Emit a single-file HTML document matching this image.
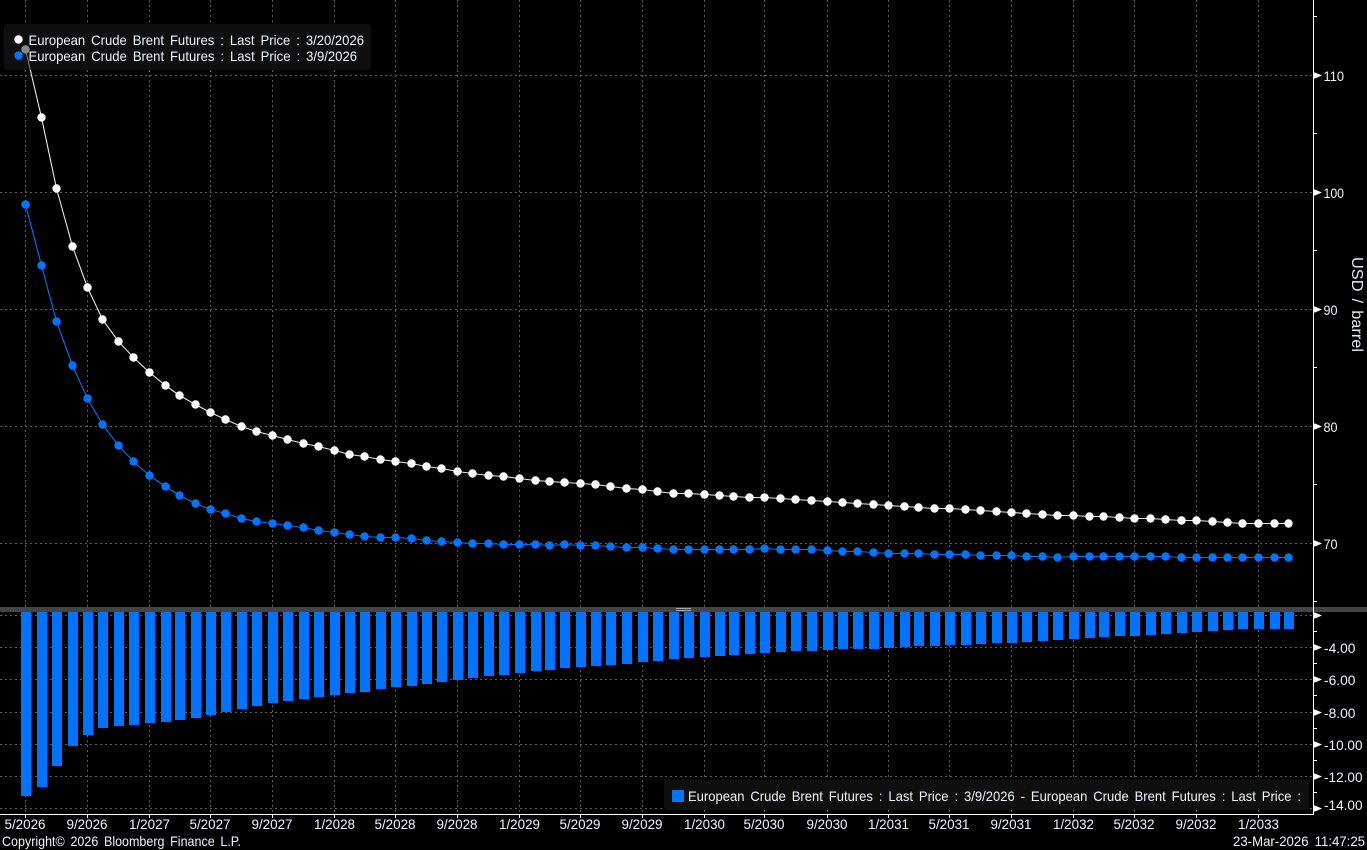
<!DOCTYPE html>
<html><head><meta charset="utf-8"><title>Brent Futures Curve</title>
<style>
html,body{margin:0;padding:0;background:#000;overflow:hidden}
svg{display:block}
text{font-family:"Liberation Sans",Arial,sans-serif;font-size:14px;fill:#eef5ff}
.w{word-spacing:2.5px}
</style></head><body>
<svg width="1367" height="850" viewBox="0 0 1367 850" xmlns="http://www.w3.org/2000/svg">
<defs>
<marker id="mw" markerUnits="userSpaceOnUse" markerWidth="10" markerHeight="10" refX="5" refY="5"><circle cx="5" cy="5" r="4.2" fill="#fff"/></marker>
<marker id="mb" markerUnits="userSpaceOnUse" markerWidth="10" markerHeight="10" refX="5" refY="5"><circle cx="5" cy="5" r="4.2" fill="#0073ff"/></marker>
</defs>
<rect width="1367" height="850" fill="#000"/>
<!-- grid -->
<path fill="none" stroke="#5c5c5c" stroke-width="1" stroke-dasharray="2 3" shape-rendering="crispEdges" d="M25.5 0V814M87.5 0V814M149.5 0V814M210.5 0V814M272.5 0V814M334.5 0V814M395.5 0V814M457.5 0V814M519.5 0V814M580.5 0V814M642.5 0V814M704.5 0V814M764.5 0V814M827.5 0V814M888.5 0V814M949.5 0V814M1011.5 0V814M1073.5 0V814M1134.5 0V814M1196.5 0V814M1258.5 0V814M0 75.5H1313M0 192.5H1313M0 309.5H1313M0 426.5H1313M0 543.5H1313M0 615.5H1313M0 647.5H1313M0 679.5H1313M0 712.5H1313M0 744.5H1313M0 776.5H1313M0 808.5H1313"/>
<rect x="4" y="24" width="367" height="46" rx="3" fill="#0f0f0f"/>
<rect x="664" y="780" width="645" height="30" rx="3" fill="#0f0f0f"/>
<!-- separator -->
<rect x="0" y="607" width="1367" height="5" fill="#444"/>
<rect x="676" y="608" width="15" height="1" fill="#aaa"/>
<rect x="676" y="610" width="15" height="1" fill="#aaa"/>
<!-- bars -->
<path fill="#0073ff" shape-rendering="crispEdges" d="M21 612h10V796h-10zM37 612h10V787h-10zM52 612h10V766h-10zM68 612h10V746h-10zM83 612h10V735h-10zM98 612h10V728h-10zM114 612h10V726h-10zM129 612h10V725h-10zM145 612h10V723h-10zM161 612h10V722h-10zM175 612h10V720h-10zM191 612h10V718h-10zM206 612h10V715h-10zM221 612h10V712h-10zM237 612h10V709h-10zM252 612h10V706h-10zM268 612h10V703h-10zM283 612h10V701h-10zM299 612h10V699h-10zM314 612h10V697h-10zM330 612h10V695h-10zM345 612h10V693h-10zM360 612h10V692h-10zM376 612h10V689h-10zM391 612h10V687h-10zM407 612h10V686h-10zM422 612h10V684h-10zM437 612h10V682h-10zM453 612h10V680h-10zM468 612h10V678h-10zM484 612h10V676h-10zM499 612h10V675h-10zM515 612h10V673h-10zM531 612h10V671h-10zM545 612h10V670h-10zM560 612h10V668h-10zM576 612h10V667h-10zM591 612h10V666h-10zM606 612h10V665h-10zM622 612h10V664h-10zM638 612h10V662h-10zM653 612h10V661h-10zM669 612h10V659h-10zM684 612h10V658h-10zM700 612h10V657h-10zM715 612h10V656h-10zM729 612h10V655h-10zM745 612h10V654h-10zM760 612h10V653h-10zM776 612h10V652h-10zM791 612h10V651h-10zM807 612h10V651h-10zM823 612h10V650h-10zM838 612h10V649h-10zM853 612h10V649h-10zM869 612h10V649h-10zM884 612h10V648h-10zM900 612h10V647h-10zM914 612h10V646h-10zM930 612h10V646h-10zM945 612h10V645h-10zM961 612h10V645h-10zM976 612h10V644h-10zM992 612h10V643h-10zM1007 612h10V643h-10zM1022 612h10V642h-10zM1038 612h10V641h-10zM1053 612h10V640h-10zM1069 612h10V639h-10zM1085 612h10V638h-10zM1099 612h10V637h-10zM1115 612h10V636h-10zM1130 612h10V636h-10zM1146 612h10V635h-10zM1161 612h10V634h-10zM1177 612h10V633h-10zM1192 612h10V632h-10zM1208 612h10V631h-10zM1223 612h10V630h-10zM1238 612h10V629h-10zM1254 612h10V629h-10zM1270 612h10V629h-10zM1284 612h10V629h-10z"/>
<!-- blue series -->
<polyline fill="none" stroke="#0073ff" stroke-width="1.1" marker-start="url(#mb)" marker-mid="url(#mb)" marker-end="url(#mb)" points="25.5,204.5 41.5,265.5 56.5,321.5 72.5,365.5 87.5,398.5 102.5,424.5 118.5,445.5 133.5,461.5 149.5,475.5 165.5,486.5 179.5,495.5 195.5,503.5 210.5,509.5 225.5,513.5 241.5,518.5 256.5,521.5 272.5,523.5 287.5,525.5 303.5,527.5 318.5,530.5 334.5,532.5 349.5,534.5 364.5,536.5 380.5,537.5 395.5,537.5 411.5,538.5 426.5,540.5 441.5,541.5 457.5,542.5 472.5,543.5 488.5,543.5 503.5,544.5 519.5,544.5 535.5,544.5 549.5,545.5 564.5,544.5 580.5,545.5 595.5,545.5 610.5,546.5 626.5,547.5 642.5,547.5 657.5,548.5 673.5,549.5 688.5,549.5 704.5,549.5 719.5,549.5 733.5,549.5 749.5,549.5 764.5,548.5 780.5,549.5 795.5,549.5 811.5,549.5 827.5,550.5 842.5,551.5 857.5,551.5 873.5,552.5 888.5,553.5 904.5,553.5 918.5,553.5 934.5,554.5 949.5,554.5 965.5,554.5 980.5,555.5 996.5,555.5 1011.5,555.5 1026.5,556.5 1042.5,556.5 1057.5,557.5 1073.5,556.5 1089.5,556.5 1103.5,556.5 1119.5,556.5 1134.5,556.5 1150.5,556.5 1165.5,556.5 1181.5,557.5 1196.5,557.5 1212.5,557.5 1227.5,557.5 1242.5,557.5 1258.5,557.5 1274.5,557.5 1288.5,557.5"/>
<!-- white series -->
<polyline fill="none" stroke="#e8e8e8" stroke-width="1.1" marker-start="url(#mw)" marker-mid="url(#mw)" marker-end="url(#mw)" points="25.5,49.5 41.5,117.5 56.5,188.5 72.5,246.5 87.5,287.5 102.5,319.5 118.5,341.5 133.5,357.5 149.5,372.5 165.5,385.5 179.5,395.5 195.5,404.5 210.5,412.5 225.5,419.5 241.5,426.5 256.5,431.5 272.5,435.5 287.5,439.5 303.5,443.5 318.5,446.5 334.5,450.5 349.5,454.5 364.5,456.5 380.5,459.5 395.5,461.5 411.5,463.5 426.5,466.5 441.5,468.5 457.5,471.5 472.5,473.5 488.5,475.5 503.5,476.5 519.5,478.5 535.5,480.5 549.5,481.5 564.5,482.5 580.5,483.5 595.5,484.5 610.5,486.5 626.5,488.5 642.5,489.5 657.5,491.5 673.5,493.5 688.5,493.5 704.5,494.5 719.5,495.5 733.5,496.5 749.5,497.5 764.5,497.5 780.5,498.5 795.5,499.5 811.5,500.5 827.5,501.5 842.5,502.5 857.5,503.5 873.5,504.5 888.5,505.5 904.5,506.5 918.5,507.5 934.5,508.5 949.5,508.5 965.5,509.5 980.5,510.5 996.5,511.5 1011.5,512.5 1026.5,513.5 1042.5,514.5 1057.5,515.5 1073.5,515.5 1089.5,516.5 1103.5,516.5 1119.5,517.5 1134.5,518.5 1150.5,518.5 1165.5,519.5 1181.5,520.5 1196.5,520.5 1212.5,521.5 1227.5,522.5 1242.5,523.5 1258.5,523.5 1274.5,523.5 1288.5,523.5"/>
<!-- legend overlay -->
<rect x="4" y="24" width="367" height="46" rx="3" fill="#0f0f0f" fill-opacity=".5"/>
<circle cx="18.5" cy="39.5" r="4.2" fill="#fff"/>
<circle cx="18.5" cy="55.5" r="4.2" fill="#0073ff"/>
<text class="w" x="28.5" y="45" textLength="335.5" lengthAdjust="spacingAndGlyphs">European Crude Brent Futures : Last Price : 3/20/2026</text>
<text class="w" x="28.5" y="61" textLength="328.5" lengthAdjust="spacingAndGlyphs">European Crude Brent Futures : Last Price : 3/9/2026</text>
<rect x="672" y="790" width="12" height="12" fill="#0073ff"/>
<text class="w" x="688" y="801" textLength="613" lengthAdjust="spacingAndGlyphs">European Crude Brent Futures : Last Price : 3/9/2026 - European Crude Brent Futures : Last Price :</text>
<!-- axes -->
<path fill="none" stroke="#fff" stroke-width="1" shape-rendering="crispEdges" d="M1313.5 0V815M0 814.5H1314M25.5 814V818M87.5 814V818M149.5 814V818M210.5 814V818M272.5 814V818M334.5 814V818M395.5 814V818M457.5 814V818M519.5 814V818M580.5 814V818M642.5 814V818M704.5 814V818M764.5 814V818M827.5 814V818M888.5 814V818M949.5 814V818M1011.5 814V818M1073.5 814V818M1134.5 814V818M1196.5 814V818M1258.5 814V818M1313 16.5H1317M1313 133.5H1317M1313 250.5H1317M1313 367.5H1317M1313 484.5H1317M1313 601.5H1317M1313 631.5H1317M1313 663.5H1317M1313 695.5H1317M1313 728.5H1317M1313 760.5H1317M1313 792.5H1317"/>
<path fill="#fff" d="M1313 72.500h2l7 3-7 3h-2zM1313 189.500h2l7 3-7 3h-2zM1313 306.500h2l7 3-7 3h-2zM1313 423.500h2l7 3-7 3h-2zM1313 540.500h2l7 3-7 3h-2zM1313 612.500h2l7 3-7 3h-2zM1313 644.500h2l7 3-7 3h-2zM1313 676.500h2l7 3-7 3h-2zM1313 709.500h2l7 3-7 3h-2zM1313 741.500h2l7 3-7 3h-2zM1313 773.500h2l7 3-7 3h-2zM1313 805.500h2l7 3-7 3h-2z"/>
<!-- y labels -->
<text x="1323.500" y="81" textLength="20.500" lengthAdjust="spacingAndGlyphs">110</text>
<text x="1323.500" y="198" textLength="20.500" lengthAdjust="spacingAndGlyphs">100</text>
<text x="1323.500" y="315" textLength="14" lengthAdjust="spacingAndGlyphs">90</text>
<text x="1323.500" y="432" textLength="14" lengthAdjust="spacingAndGlyphs">80</text>
<text x="1323.500" y="549" textLength="14" lengthAdjust="spacingAndGlyphs">70</text>
<text x="1324" y="653" textLength="31.500" lengthAdjust="spacingAndGlyphs">-4.00</text>
<text x="1324" y="685" textLength="31.500" lengthAdjust="spacingAndGlyphs">-6.00</text>
<text x="1324" y="718" textLength="31.500" lengthAdjust="spacingAndGlyphs">-8.00</text>
<text x="1324" y="750" textLength="38.500" lengthAdjust="spacingAndGlyphs">-10.00</text>
<text x="1324" y="782" textLength="38.500" lengthAdjust="spacingAndGlyphs">-12.00</text>
<text x="1324" y="810" textLength="38.500" lengthAdjust="spacingAndGlyphs">-14.00</text>
<text class="w" transform="translate(1352 257) rotate(90)" style="font-size:16px;fill:#dcebf5" textLength="95" lengthAdjust="spacingAndGlyphs">USD / barrel</text>
<!-- x labels -->
<g>
<text x="4.500" y="829" textLength="41" lengthAdjust="spacingAndGlyphs">5/2026</text>
<text x="66.500" y="829" textLength="41" lengthAdjust="spacingAndGlyphs">9/2026</text>
<text x="129" y="829" textLength="41" lengthAdjust="spacingAndGlyphs">1/2027</text>
<text x="189.500" y="829" textLength="41" lengthAdjust="spacingAndGlyphs">5/2027</text>
<text x="251.500" y="829" textLength="41" lengthAdjust="spacingAndGlyphs">9/2027</text>
<text x="314" y="829" textLength="41" lengthAdjust="spacingAndGlyphs">1/2028</text>
<text x="374.500" y="829" textLength="41" lengthAdjust="spacingAndGlyphs">5/2028</text>
<text x="436.500" y="829" textLength="41" lengthAdjust="spacingAndGlyphs">9/2028</text>
<text x="499" y="829" textLength="41" lengthAdjust="spacingAndGlyphs">1/2029</text>
<text x="559.500" y="829" textLength="41" lengthAdjust="spacingAndGlyphs">5/2029</text>
<text x="621.500" y="829" textLength="41" lengthAdjust="spacingAndGlyphs">9/2029</text>
<text x="684" y="829" textLength="41" lengthAdjust="spacingAndGlyphs">1/2030</text>
<text x="743.500" y="829" textLength="41" lengthAdjust="spacingAndGlyphs">5/2030</text>
<text x="806.500" y="829" textLength="41" lengthAdjust="spacingAndGlyphs">9/2030</text>
<text x="868" y="829" textLength="41" lengthAdjust="spacingAndGlyphs">1/2031</text>
<text x="928.500" y="829" textLength="41" lengthAdjust="spacingAndGlyphs">5/2031</text>
<text x="990.500" y="829" textLength="41" lengthAdjust="spacingAndGlyphs">9/2031</text>
<text x="1053" y="829" textLength="41" lengthAdjust="spacingAndGlyphs">1/2032</text>
<text x="1113.500" y="829" textLength="41" lengthAdjust="spacingAndGlyphs">5/2032</text>
<text x="1175.500" y="829" textLength="41" lengthAdjust="spacingAndGlyphs">9/2032</text>
<text x="1238" y="829" textLength="41" lengthAdjust="spacingAndGlyphs">1/2033</text>
</g>
<text class="w" x="2" y="846" textLength="239" lengthAdjust="spacingAndGlyphs">Copyright© 2026 Bloomberg Finance L.P.</text>
<text class="w" x="1233" y="846" textLength="132" lengthAdjust="spacingAndGlyphs">23-Mar-2026 11:47:25</text>
</svg>
</body></html>
